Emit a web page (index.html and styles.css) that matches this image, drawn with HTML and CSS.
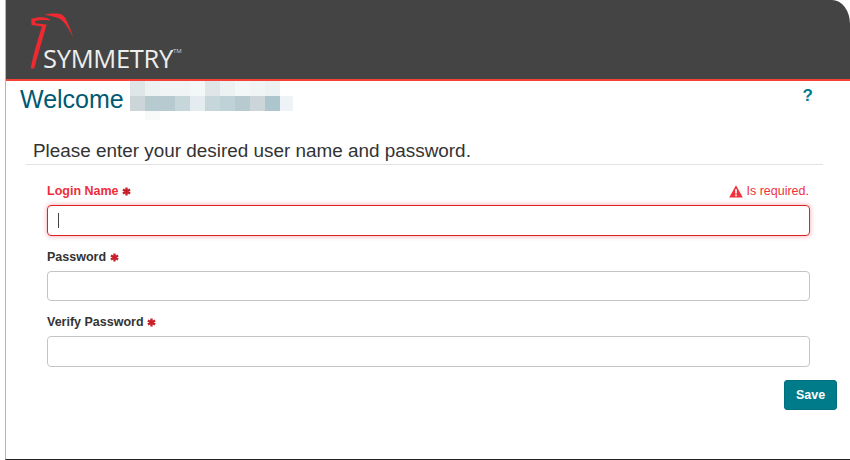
FILE: index.html
```html
<!DOCTYPE html>
<html lang="en">
<head>
    <meta charset="UTF-8">
    <title>Symmetry</title>
    <link rel="stylesheet" href="styles.css">
</head>
<body>
    <div class="page">
        <div class="header">
            <svg class="logo-mark" width="60" height="62" viewBox="26 10 60 62">
                <path d="M31.2 19 C35 17.6 40 16.9 44 17.4 C47 17.8 49.4 18.9 50.6 20.6 C46 19.8 40 19.8 35 20.9 L35.2 23.3 L46.6 24.6 C43 38 38 54 34.2 68.4 L30.6 68.4 C33.5 54 38 39 42 26.6 L33 25.2 L31.6 25 Z" fill="#ee2a30"/>
                <path d="M44.6 14.8 C49 13.6 55 13.2 59.8 14 C63 14.6 65 17 66.6 20.4 C69 25.5 71.4 31 73.2 37 C70 31 67 26 63.4 21.8 C60.6 18.6 57 17.2 53 16.4 C50 15.8 47 15.4 44.6 14.8 Z" fill="#ee2a30"/>
            </svg>
            <span class="logo-text">SYMMETRY<sup class="tm">TM</sup></span>
        </div>
        <div class="welcome-row">
            <h1 class="welcome">Welcome</h1>
            <div class="blur">
                <i class="c1"></i><i class="c2"></i><i class="c3"></i><i class="c3"></i><i class="c4"></i><i class="c1"></i><i class="c2"></i><i class="c4"></i><i class="c3"></i><i class="c2"></i><i></i>
                <i class="d1"></i><i class="d2"></i><i class="d2"></i><i class="d3"></i><i class="d4"></i><i class="d3"></i><i class="d5"></i><i class="d2"></i><i class="d1"></i><i class="d6"></i><i class="d7"></i>
                <i></i><i class="e1"></i>
            </div>
            <span class="help">?</span>
        </div>
        <h2 class="section-title">Please enter your desired user name and password.</h2>
        <form class="form">
            <div class="field has-error">
                <div class="label-row">
                    <label>Login Name <svg class="req" viewBox="0 0 10 10"><path d="M5 0.5V9.5M1 2.7L9 7.3M9 2.7L1 7.3"/></svg></label>
                    <span class="error-msg">
                        <svg class="warn" viewBox="0 0 14 13"><path d="M7 0.3 L13.8 12.6 H0.2 Z" fill="#f0323c"/><path d="M6.2 4.2H7.8V8.6H6.2ZM6.2 9.6H7.8V11.2H6.2Z" fill="#fff"/></svg>
                        Is required.
                    </span>
                </div>
                <div class="input focus"><span class="caret"></span></div>
            </div>
            <div class="field">
                <div class="label-row">
                    <label>Password <svg class="req" viewBox="0 0 10 10"><path d="M5 0.5V9.5M1 2.7L9 7.3M9 2.7L1 7.3"/></svg></label>
                </div>
                <div class="input short"></div>
            </div>
            <div class="field">
                <div class="label-row">
                    <label>Verify Password <svg class="req" viewBox="0 0 10 10"><path d="M5 0.5V9.5M1 2.7L9 7.3M9 2.7L1 7.3"/></svg></label>
                </div>
                <div class="input"></div>
            </div>
            <div class="actions">
                <button type="button" class="save">Save</button>
            </div>
        </form>
    </div>
</body>
</html>
```

FILE: styles.css
```css
html, body {
    margin: 0;
    padding: 0;
    height: 460px;
    overflow: hidden;
    background-color: #fff;
    font-family: "Liberation Sans", Arial, sans-serif;
}
.page {
    box-sizing: border-box;
    height: 460px;
    margin-left: 5px;
    border-left: 1px solid #b5b5b5;
    border-bottom: 1px solid #222;
}
.header {
    height: 79px;
    background-color: #444;
    border-bottom: 2px solid #f44336;
    border-top-right-radius: 18px 24px;
    display: flex;
    align-items: flex-end;
}
.logo-mark {
    flex: none;
    margin: 0 -43px 7px 20px;
}
.logo-text {
    color: #eee;
    font-family: "Open Sans", sans-serif;
    font-size: 25.5px;
    letter-spacing: -0.3px;
    line-height: 30px;
    margin: 0 0 6px 0;
}
.tm {
    font-size: 6px;
    letter-spacing: 0;
    vertical-align: top;
    line-height: 16px;
    color: #ccc;
}

.welcome-row {
    display: flex;
    align-items: flex-start;
    height: 55px;
    padding-left: 14px;
}
.welcome {
    margin: 3px 0 0 0;
    font-size: 25px;
    line-height: 30px;
    font-weight: normal;
    color: #005a72;
}
.blur {
    display: grid;
    grid-template-columns: repeat(10, 15px) 13px;
    grid-template-rows: 15px 15px 9px;
    margin-left: 6px;
}
.c1 { background-color: #dfe6e8; }
.c2 { background-color: #ecf1f2; }
.c3 { background-color: #f0f4f5; }
.c4 { background-color: #f4f7f8; }
.d1 { background-color: #ccd6d8; }
.d2 { background-color: #b7cad0; }
.d3 { background-color: #c6d6da; }
.d4 { background-color: #e4ecef; }
.d5 { background-color: #bfd2d8; }
.d6 { background-color: #adc5cc; }
.d7 { background-color: #edf3f6; }
.e1 { background-color: #f8f9f9; }
.help {
    margin-left: auto;
    margin-right: 37px;
    margin-top: 5px;
    font-size: 17px;
    line-height: 20px;
    font-weight: bold;
    color: #007b8f;
}

.section-title {
    margin: 0 27px 0 20px;
    padding: 3px 0 1px 7px;
    border-bottom: 1px solid #e2e2e2;
    font-size: 18.9px;
    line-height: 24px;
    font-weight: normal;
    color: #333;
}
.form {
    padding: 15px 13px 0 41px;
}
.field {
    margin-right: 27px;
    margin-bottom: 10px;
}
.label-row {
    box-sizing: border-box;
    display: flex;
    justify-content: space-between;
    align-items: center;
    height: 24px;
    padding: 0 1px 2px 0;
    margin-bottom: 1px;
}
.label-row label {
    font-size: 12.5px;
    font-weight: bold;
    color: #333;
}
.req {
    width: 9px;
    height: 9px;
    vertical-align: -1px;
    stroke: #c8202a;
    stroke-width: 2.6;
}
.input {
    box-sizing: border-box;
    height: 31px;
    border: 1px solid #c4c4c4;
    border-radius: 4px;
    display: flex;
    align-items: center;
    padding-left: 10px;
}
.short {
    height: 30px;
}
.caret {
    width: 1px;
    height: 15px;
    background-color: #444;
}
.has-error label {
    color: #ee2e3a;
}
.has-error .input {
    border-color: #dd2222;
    box-shadow: 0 0 5px rgba(238, 46, 58, 0.45);
}
.error-msg {
    font-size: 12.5px;
    color: #f0323c;
    display: flex;
    align-items: center;
    gap: 3px;
}
.warn {
    width: 14px;
    height: 13px;
}
.actions {
    display: flex;
    justify-content: flex-end;
    margin-top: 13px;
}
.save {
    width: 53px;
    height: 30px;
    padding: 0;
    border: 1px solid #007080;
    border-radius: 3px;
    background-color: #007b8a;
    color: #fff;
    font-family: "Liberation Sans", Arial, sans-serif;
    font-size: 12.5px;
    font-weight: bold;
}
```
